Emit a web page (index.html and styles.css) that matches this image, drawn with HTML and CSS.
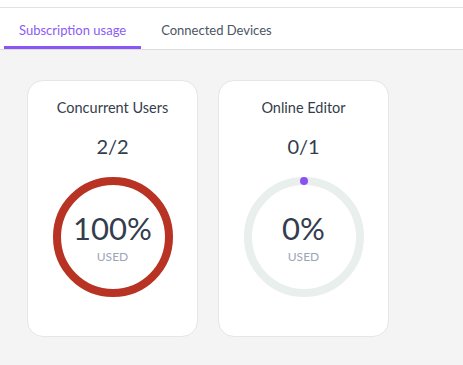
FILE: index.html
```html
<!DOCTYPE html>
<html lang="en">
    <head>
        <meta charset="utf-8" />
        <title>Subscription usage</title>
        <link rel="stylesheet" href="styles.css">
    </head>
    <body>
        <div class="topbar"></div>
        <div class="tabs">
            <div class="tab active">Subscription usage</div>
            <div class="tab">Connected Devices</div>
        </div>
        <div class="content">
            <!-- Concurrent users -->
            <div class="card">
                <div class="card-title">Concurrent Users</div>
                <div class="count">2/2</div>
                <div class="gauge">
                    <svg width="120" height="120" viewBox="0 0 120 120">
                        <circle cx="60" cy="60" r="56" fill="none" stroke="#e8efec" stroke-width="8"/>
                        <circle cx="60" cy="60" r="56" fill="none" stroke="#b83323" stroke-width="8"/>
                    </svg>
                    <div class="gauge-text">
                        <div class="percent">100%</div>
                        <div class="used">USED</div>
                    </div>
                </div>
            </div>

            <!-- Online editor -->
            <div class="card">
                <div class="card-title">Online Editor</div>
                <div class="count">0/1</div>
                <div class="gauge">
                    <svg width="120" height="120" viewBox="0 0 120 120">
                        <circle cx="60" cy="60" r="56" fill="none" stroke="#e8efec" stroke-width="8"/>
                        <circle cx="60" cy="4" r="4" fill="#8b4ff6"/>
                    </svg>
                    <div class="gauge-text">
                        <div class="percent">0%</div>
                        <div class="used">USED</div>
                    </div>
                </div>
            </div>
        </div>
    </body>
</html>
```

FILE: styles.css
```css
body {
    margin: 0;
    background-color: #f4f4f4;
    font-family: Lato, "Open Sans", sans-serif;
    color: #333d4d;
}
.topbar {
    height: 7px;
    background-color: #fff;
    border-bottom: 1px solid #e2e2e2;
}
.tabs {
    display: flex;
    gap: 5px;
    padding-left: 4px;
    background-color: #fff;
    border-bottom: 1px solid #dcdcdc;
}
.tab {
    padding: 13px 15px 7px 15px;
    font-size: 13px;
    line-height: 18px;
    color: #4b5563;
    border-bottom: 3px solid transparent;
}
.tab.active {
    color: #8b5cf6;
    border-bottom-color: #8b55f6;
}
.content {
    display: flex;
    gap: 20px;
    padding: 30px 27px;
}
.card {
    width: 171px;
    height: 257px;
    box-sizing: border-box;
    background-color: #fff;
    border: 1px solid #e3e6ea;
    border-radius: 16px;
    display: flex;
    flex-direction: column;
    align-items: center;
    padding-top: 17px;
}
.card-title {
    font-size: 14.5px;
    line-height: 20px;
}
.count {
    margin-top: 16px;
    font-size: 20px;
    line-height: 24px;
}
.gauge {
    position: relative;
    margin-top: 19px;
    width: 120px;
    height: 120px;
}
.gauge svg {
    display: block;
}
.gauge-text {
    position: absolute;
    left: 0;
    right: 0;
    top: 32px;
    text-align: center;
}
.percent {
    font-size: 31px;
    line-height: 38px;
}
.used {
    margin-top: 2px;
    font-size: 12px;
    color: #9aa6b6;
}
```
